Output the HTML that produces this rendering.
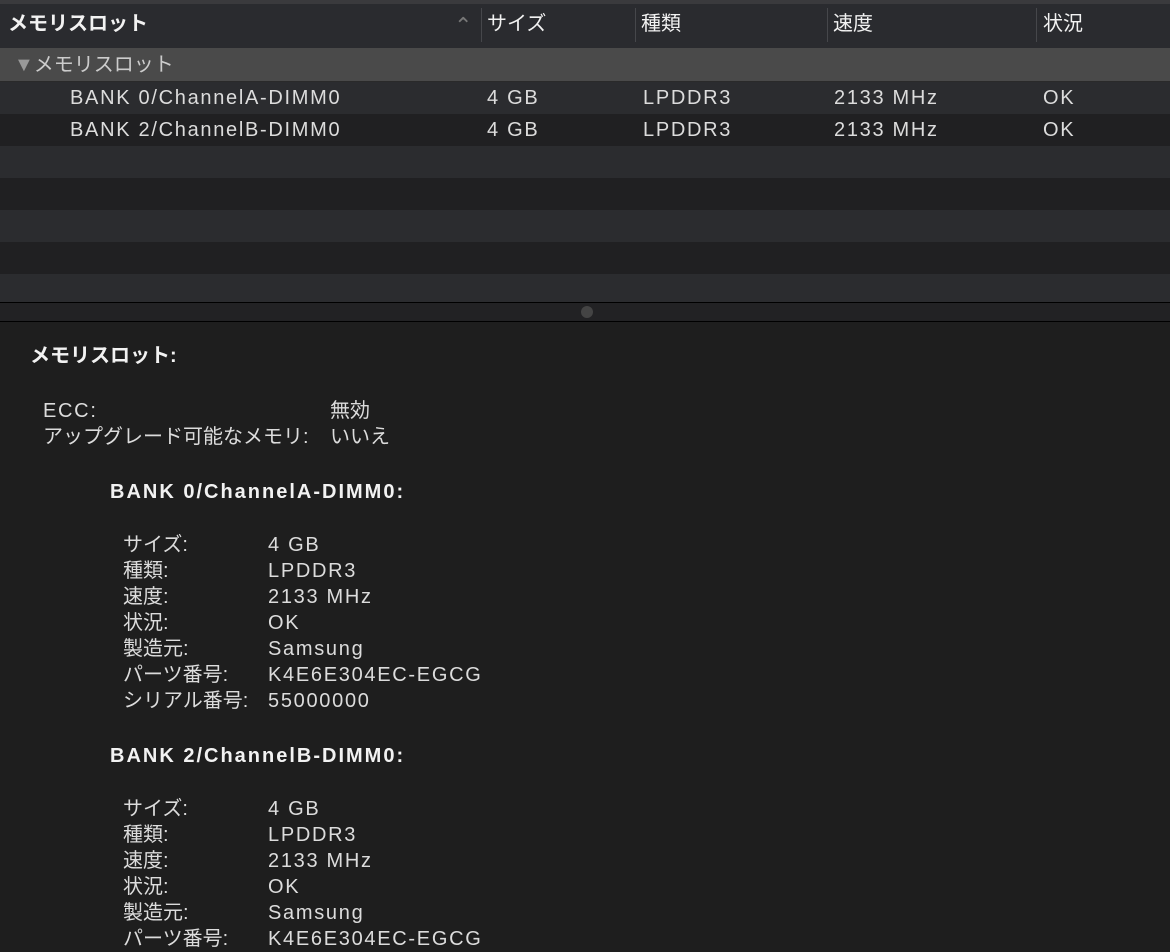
<!DOCTYPE html>
<html><head><meta charset="utf-8"><style>
body{margin:0;width:1170px;height:950px;overflow:hidden;background:#1e1e1e;font-family:"Liberation Sans","Noto Sans CJK JP",sans-serif;font-size:20px;color:#dcdcdc;position:relative}
.a{position:absolute;line-height:26px;white-space:nowrap}
.r{position:absolute;left:0;width:1170px}
.b{font-weight:bold;color:#f2f2f2}
.l{letter-spacing:1.7px}
.b.l{letter-spacing:2px}
.sep{position:absolute;top:8px;width:1px;height:34px;background:#46474b}
</style></head><body>
<div class="r" style="top:0;height:4px;background:#3a3a3d"></div>
<div class="r" style="top:4px;height:44px;background:#2a2b2f"></div>
<div class="sep" style="left:481px"></div>
<div class="sep" style="left:635px"></div>
<div class="sep" style="left:827px"></div>
<div class="sep" style="left:1036px"></div>
<div class="a b" style="left:8px;top:11px">メモリスロット</div>
<div class="a" style="left:454px;top:13px;color:#777;font-size:22px">&#8963;</div>
<div class="a" style="left:487px;top:11px;color:#f2f2f2">サイズ</div>
<div class="a" style="left:641px;top:11px;color:#f2f2f2">種類</div>
<div class="a" style="left:833px;top:11px;color:#f2f2f2">速度</div>
<div class="a" style="left:1043px;top:11px;color:#f2f2f2">状況</div>
<div class="r" style="top:48px;height:33px;background:#4a4a4a"></div>
<div class="a" style="left:14px;top:52px;color:#ccc"><span style="color:#999">▼</span>メモリスロット</div>
<div class="r" style="top:81px;height:1px;background:#2a2a2a"></div>
<div class="r" style="top:82px;height:32px;background:#2b2c2f"></div>
<div class="r" style="top:114px;height:32px;background:#202022"></div>
<div class="r" style="top:146px;height:32px;background:#2b2c2f"></div>
<div class="r" style="top:178px;height:32px;background:#202022"></div>
<div class="r" style="top:210px;height:32px;background:#2b2c2f"></div>
<div class="r" style="top:242px;height:32px;background:#202022"></div>
<div class="r" style="top:274px;height:28px;background:#2b2c2f"></div>
<div class="a l" style="left:70px;top:85px">BANK 0/ChannelA-DIMM0</div>
<div class="a l" style="left:487px;top:85px">4 GB</div>
<div class="a l" style="left:643px;top:85px">LPDDR3</div>
<div class="a l" style="left:834px;top:85px">2133 MHz</div>
<div class="a l" style="left:1043px;top:85px">OK</div>
<div class="a l" style="left:70px;top:117px">BANK 2/ChannelB-DIMM0</div>
<div class="a l" style="left:487px;top:117px">4 GB</div>
<div class="a l" style="left:643px;top:117px">LPDDR3</div>
<div class="a l" style="left:834px;top:117px">2133 MHz</div>
<div class="a l" style="left:1043px;top:117px">OK</div>
<div class="r" style="top:302px;height:1px;background:#000"></div>
<div class="r" style="top:303px;height:18px;background:#222224"></div>
<div style="position:absolute;left:581px;top:306px;width:12px;height:12px;border-radius:6px;background:#444"></div>
<div class="r" style="top:321px;height:1px;background:#000"></div>
<div class="a b" style="left:30px;top:343px">メモリスロット:</div>
<div class="a l" style="left:43px;top:398px">ECC:</div><div class="a" style="left:330px;top:398px">無効</div>
<div class="a" style="left:43px;top:424px">アップグレード可能なメモリ:</div><div class="a" style="left:330px;top:424px">いいえ</div>
<div class="a b l" style="left:110px;top:479px">BANK 0/ChannelA-DIMM0:</div>
<div class="a" style="left:123px;top:532px">サイズ:<br>種類:<br>速度:<br>状況:<br>製造元:<br>パーツ番号:<br>シリアル番号:</div>
<div class="a l" style="left:268px;top:532px">4 GB<br>LPDDR3<br>2133 MHz<br>OK<br>Samsung<br>K4E6E304EC-EGCG<br>55000000</div>
<div class="a b l" style="left:110px;top:743px">BANK 2/ChannelB-DIMM0:</div>
<div class="a" style="left:123px;top:796px">サイズ:<br>種類:<br>速度:<br>状況:<br>製造元:<br>パーツ番号:</div>
<div class="a l" style="left:268px;top:796px">4 GB<br>LPDDR3<br>2133 MHz<br>OK<br>Samsung<br>K4E6E304EC-EGCG</div>
</body></html>
